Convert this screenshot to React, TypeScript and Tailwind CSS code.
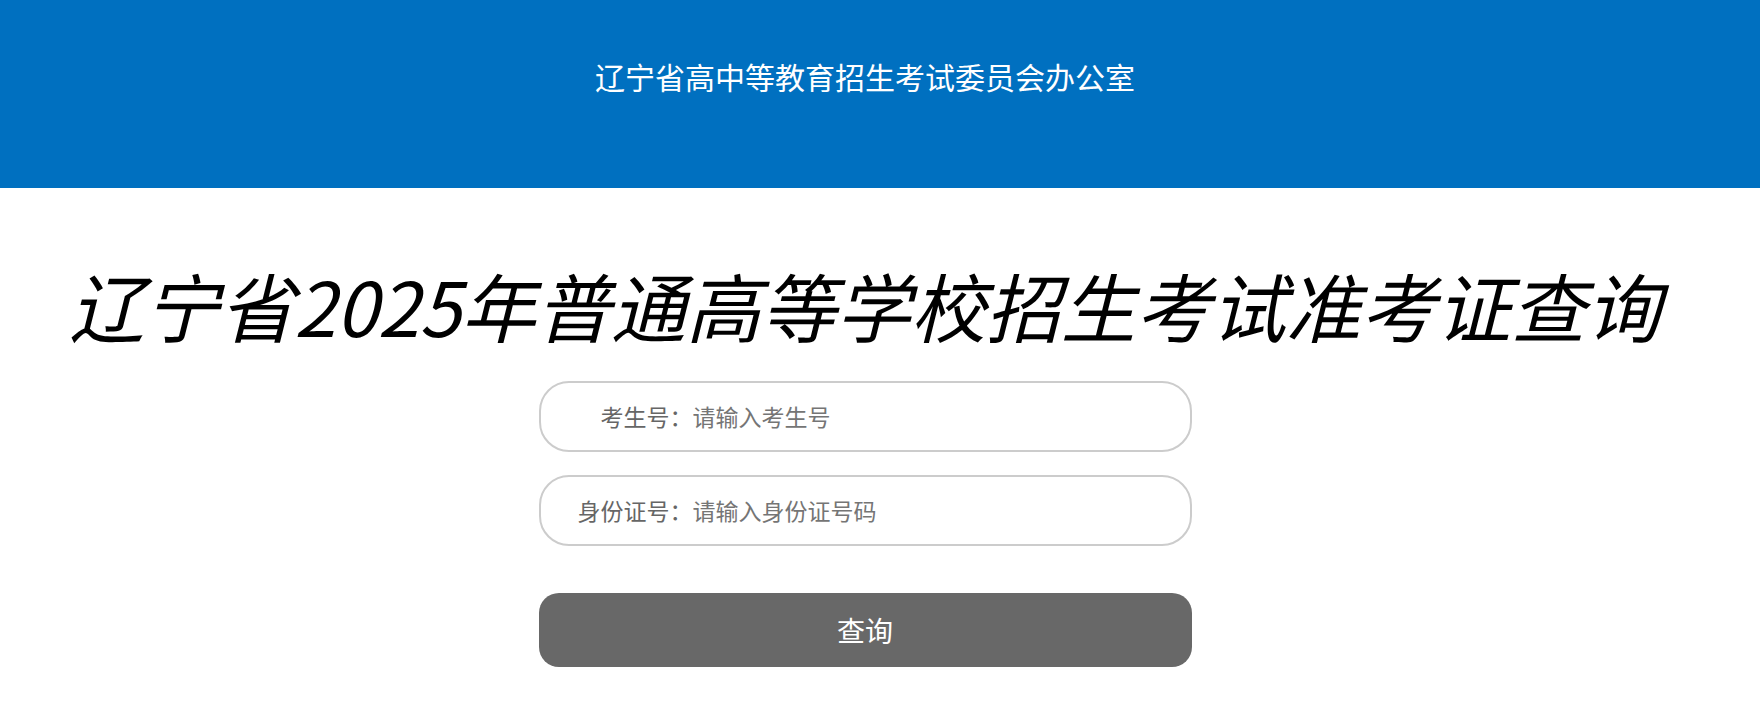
import { useState } from "react";

const font = "font-['Microsoft_YaHei','Noto_Sans_CJK_SC',sans-serif]";

function Field({ label, placeholder }: { label: string; placeholder: string }) {
  const [value, setValue] = useState("");
  return (
    <div className="flex h-[71px] w-[653px] items-center rounded-[30px] border-2 border-[#cccccc] bg-white">
      <span className="w-[152px] shrink-0 text-right text-[23px] text-[#666666]">{label}</span>
      <input
        value={value}
        onChange={(e) => setValue(e.target.value)}
        placeholder={placeholder}
        className="min-w-0 flex-1 bg-transparent text-[23px] text-[#333333] outline-none placeholder:text-[#757575]"
      />
    </div>
  );
}

export default function App() {
  return (
    <div className={`min-h-[703px] w-full bg-white ${font}`}>
      {/* Header */}
      <div className="h-[188px] w-full bg-[#0070c0]">
        <div className="w-[1730px] pt-[58px] text-center text-[30px] leading-[36px] text-white">
          辽宁省高中等教育招生考试委员会办公室
        </div>
      </div>

      <div className="flex w-[1730px] flex-col items-center">
        {/* Title */}
        <h1 className="mt-[75px] whitespace-nowrap text-[75px] leading-[84px] font-normal italic text-black">
          辽宁省2025年普通高等学校招生考试准考证查询
        </h1>

        {/* Form */}
        <div className="mt-[34px] flex flex-col gap-[23px]">
          <Field label="考生号：" placeholder="请输入考生号" />
          <Field label="身份证号：" placeholder="请输入身份证号码" />
        </div>

        <button className="mt-[47px] h-[74px] w-[653px] rounded-[20px] bg-[#686868] text-[28px] text-white">
          查询
        </button>
      </div>
    </div>
  );
}
